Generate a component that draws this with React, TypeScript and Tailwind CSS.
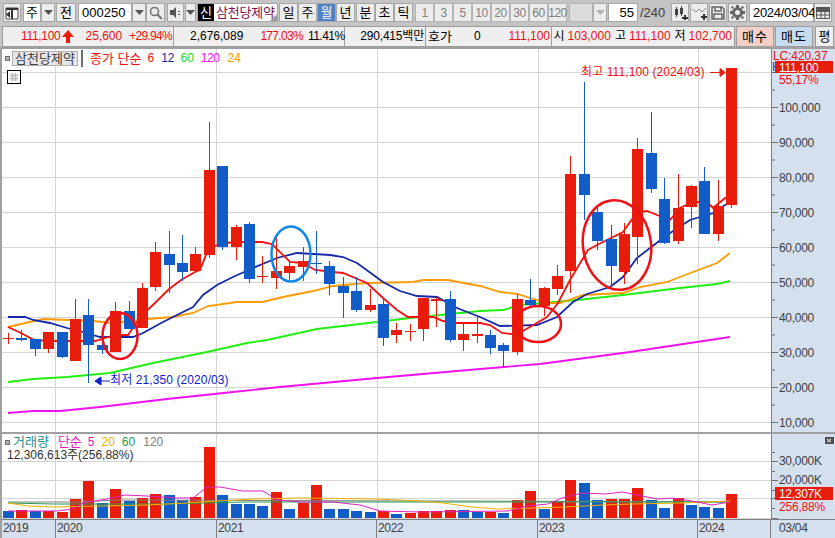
import * as React from 'react';

const RED = '#e81c0a';
const BLUE = '#125cc8';

type Candle = [number, number, number, number, 'r' | 'b'];

// body top, body bottom, wick top, wick bottom
const candles: Candle[] = [
	[338, 338, 333, 344, 'r'], [338, 340, 330, 341, 'b'], [339, 349, 339, 356, 'b'], [332, 349, 332, 353, 'r'],
	[332, 357, 332, 358, 'b'], [319, 361, 299, 361, 'r'], [315, 345, 299, 383, 'b'], [345, 350, 340, 354, 'b'],
	[311, 352, 302, 352, 'r'], [311, 329, 301, 329, 'b'], [288, 328, 283, 328, 'r'], [252, 287, 242, 291, 'r'],
	[254, 265, 231, 293, 'b'], [263, 272, 235, 281, 'b'], [254, 271, 247, 271, 'r'], [170, 255, 122, 258, 'r'],
	[166, 247, 166, 250, 'b'], [227, 247, 225, 260, 'r'], [224, 279, 222, 283, 'b'], [276, 276, 256, 283, 'r'],
	[271, 278, 235, 289, 'r'], [266, 273, 260, 280, 'r'], [261, 267, 247, 281, 'r'], [263, 263, 231, 274, 'b'],
	[266, 284, 261, 295, 'b'], [286, 293, 277, 318, 'b'], [291, 310, 277, 312, 'b'], [305, 310, 289, 312, 'r'],
	[304, 338, 299, 346, 'b'], [330, 335, 323, 343, 'r'], [331, 331, 324, 341, 'r'], [298, 329, 298, 341, 'r'],
	[299, 301, 297, 327, 'r'], [299, 340, 291, 342, 'b'], [334, 340, 322, 351, 'r'], [334, 336, 317, 343, 'r'],
	[335, 348, 330, 354, 'b'], [345, 351, 343, 367, 'b'], [299, 352, 294, 355, 'r'], [300, 305, 279, 308, 'b'],
	[288, 306, 287, 316, 'r'], [276, 289, 265, 295, 'r'], [174, 271, 156, 293, 'r'], [174, 195, 82, 220, 'b'],
	[212, 241, 206, 250, 'b'], [239, 266, 225, 287, 'b'], [234, 272, 223, 284, 'r'], [149, 237, 138, 264, 'r'],
	[153, 189, 112, 193, 'b'], [199, 243, 178, 244, 'b'], [208, 241, 174, 244, 'r'], [186, 207, 185, 228, 'r'],
	[181, 234, 167, 234, 'b'], [206, 234, 180, 241, 'r'], [68, 205, 68, 208, 'r'],
];

const volumes: [number, 'r' | 'b'][] = [
	[511, 'b'], [510, 'r'], [511, 'b'], [511, 'r'], [512, 'r'], [499, 'r'], [481, 'r'], [503, 'b'], [489, 'r'],
	[501, 'b'], [498, 'r'], [494, 'r'], [495, 'b'], [500, 'b'], [497, 'r'], [447, 'r'], [495, 'b'], [504, 'b'],
	[504, 'b'], [506, 'b'], [492, 'r'], [509, 'b'], [503, 'r'], [485, 'r'], [509, 'b'], [509, 'b'], [511, 'b'],
	[512, 'b'], [511, 'r'], [514, 'b'], [513, 'r'], [511, 'r'], [511, 'r'], [510, 'r'], [510, 'b'], [512, 'b'],
	[512, 'r'], [513, 'b'], [500, 'r'], [491, 'r'], [509, 'b'], [501, 'r'], [480, 'r'], [483, 'b'], [500, 'b'],
	[499, 'r'], [499, 'r'], [488, 'r'], [500, 'b'], [508, 'b'], [498, 'r'], [505, 'b'], [507, 'b'], [508, 'b'],
	[494, 'r'],
];

const ma6 = '8,327 21,333 34,340 48,341 95,341 115,335 128,335 141,316 155,303 168,290 181,280 195,272 200,270 208,250 217,245 233,242 262,242 272,244 290,262 303,263 315,270 333,272 343,273 367,283 383,298 397,310 408,317 433,317 443,321 457,323 480,323 490,325 502,333 512,334 523,331 547,317 558,303 570,280 588,250 597,245 623,232 637,212 647,211 657,215 670,220 680,208 693,202 707,202 713,208 725,198 731,195';
const ma12 = '8,317 25,317 33,320 50,323 67,328 83,332 100,337 133,337 143,333 163,322 193,307 203,295 217,285 233,277 253,268 277,258 297,253 330,255 343,257 357,263 383,282 400,291 417,296 437,297 457,308 480,317 500,326 537,325 557,317 573,302 587,294 610,287 623,277 637,258 667,235 690,220 713,213 725,205 731,203';
const ma24 = '8,327 43,319 93,321 113,323 147,319 173,317 193,313 208,306 237,302 262,302 283,297 313,291 333,286 367,283 413,282 423,280 448,280 480,286 500,292 517,294 547,303 560,303 583,295 623,293 640,287 667,282 693,272 717,263 730,253';
const ma60 = '8,382 33,379 67,377 110,373 153,363 207,352 247,343 267,340 317,329 377,322 410,318 480,311 503,310 520,305 577,300 623,295 680,288 717,284 730,281';
const ma120 = '8,413 33,411 60,411 100,407 167,399 233,392 280,387 377,378 480,369 540,364 630,352 730,337';

const volMa5 = '8,511 57,511 73,509 83,503 107,499 125,495 147,496 177,498 193,498 207,487 220,487 243,491 263,491 277,500 300,502 333,502 360,505 380,511 420,512 508,511 528,506 548,504 562,498 582,493 605,494 622,492 642,496 658,499 672,498 692,501 712,505 730,502';
const volMa20 = '8,503 28,506 55,507 100,506 147,505 187,503 200,502 253,499 300,498 377,499 420,501 443,503 472,507 498,509 565,507 602,505 632,504 682,503 730,501';
const volMa120 = '8,502 80,502 115,500 420,501 470,501 730,502';
const volMa60 = '8,503 53,504 167,504 243,502 420,502 730,502';

const gridX = [55.5, 216.5, 377.5, 538.5, 698.5];
const priceY = [72, 107, 142, 177, 212, 247, 282, 317, 352, 387, 422];
const priceLabels: [number, string][] = [
	[107, '100,000'], [142, '90,000'], [177, '80,000'], [212, '70,000'], [247, '60,000'],
	[282, '50,000'], [317, '40,000'], [352, '30,000'], [387, '20,000'], [422, '10,000'],
];

const cx = (i: number) => Math.round(8 + 13.39 * i);

const Btn: React.FC<{ w: string; children?: React.ReactNode; active?: boolean }> = ({ w, children, active }) => (
	<div
		className={`flex h-[19px] shrink-0 items-center justify-center border border-[#a6a6a6] text-[13px] ${w} ${
			active ? 'bg-[#4f81c4] text-white' : 'bg-[#ececec] text-black'
		}`}
	>
		{children}
	</div>
);

const Arrow: React.FC<{ w: string; muted?: boolean }> = ({ w, muted }) => (
	<Btn w={w}>
		<svg width="9" height="5" viewBox="0 0 9 5">
			<path d="M0 0h9L4.5 5z" fill={muted ? '#b0b0b0' : '#555'} />
		</svg>
	</Btn>
);

const Num: React.FC<{ children: React.ReactNode }> = ({ children }) => (
	<div className="flex h-[19px] w-[19px] shrink-0 items-center justify-center border border-[#b4b4b4] bg-[#ececec] text-[12px] tracking-[-0.5px] text-[#808080]">
		{children}
	</div>
);

const Toolbar = () => (
	<div className="flex h-[26px] items-start pt-[3px] pl-[3px]">
		<Btn w="w-[18px]">
			<svg width="14" height="14" viewBox="0 0 14 14">
				<path d="M1 2h12v11H1z" fill="#fff" stroke="#444" />
				<path d="M1 2h12v2H1zM6 4h2v9H6z" fill="#333" />
				<path d="M5 5v7L1 8.500z" fill="#333" />
			</svg>
		</Btn>
		<div className="ml-[2px] flex h-[19px] w-[18px] shrink-0 items-center justify-center border border-[#a6a6a6] bg-white text-[13px]">주</div>
		<Arrow w="w-[14px]" />
		<div className="ml-[1px]"><Btn w="w-[20px]">전</Btn></div>
		<div className="ml-[2px] flex h-[19px] w-[54px] shrink-0 items-center border border-[#a6a6a6] bg-white pl-[3px] text-[13px]">000250</div>
		<Arrow w="w-[14px]" />
		<Btn w="w-[19px]">
			<svg width="14" height="14" viewBox="0 0 14 14" fill="none" stroke="#777" strokeWidth="1.600">
				<circle cx="5.500" cy="5.500" r="4" />
				<path d="M8.500 8.500L13 13" strokeWidth="2.200" />
			</svg>
		</Btn>
		<div className="ml-[2px]">
			<Btn w="w-[17px]">
				<svg width="13" height="13" viewBox="0 0 13 13">
					<path d="M1 4h3l3-3v11L4 9H1z" fill="#555" />
					<path d="M9 5h2v1H9zM9 8h2v1H9z" fill="#555" />
				</svg>
			</Btn>
		</div>
		<div className="ml-[1px]"><Arrow w="w-[11px]" /></div>
		<div className="relative ml-[1px] flex h-[19px] w-[81px] shrink-0 items-center border border-[#a6a6a6] bg-white text-[13px] tracking-[-0.2px] text-[#7a1050]">
			<span className="flex h-[17px] w-[16px] shrink-0 items-center justify-center bg-black text-white">신</span>
			<span className="ml-[2px]">삼천당제약</span>
			<span className="absolute right-0 bottom-0 h-0 w-0 border-b-[7px] border-l-[7px] border-b-[#a0a0a0] border-l-transparent" />
		</div>
		<div className="ml-[1px] flex">
			<Btn w="w-[19px]">일</Btn>
			<Btn w="w-[19px]">주</Btn>
			<Btn w="w-[19px]" active>월</Btn>
			<Btn w="w-[19px]">년</Btn>
		</div>
		<div className="ml-[1px] flex">
			<Btn w="w-[19px]">분</Btn>
			<Btn w="w-[19px]">초</Btn>
			<Btn w="w-[19px]">틱</Btn>
		</div>
		<div className="ml-[2px] flex">
			{['1', '3', '5', '10', '20', '30', '60', '120'].map(n => (
				<Num key={n}>{n}</Num>
			))}
		</div>
		<div className="ml-[2px] h-[19px] w-[24px] shrink-0 border border-[#b4b4b4] bg-[#dcdcdc]" />
		<Arrow w="w-[14px]" muted />
		<div className="ml-[1px] flex h-[19px] w-[30px] shrink-0 items-center justify-end border border-[#a6a6a6] bg-white pr-[3px] text-[13px]">55</div>
		<span className="ml-[2px] w-[31px] shrink-0 pt-[1px] text-[13px] leading-[17px] text-[#404040]">/240</span>
		<div className="flex gap-px">
			<Btn w="w-[18px]">
				<svg width="15" height="14" viewBox="0 0 15 14">
					<path d="M2 3h3v6H2zM7 2h3v6H7zM3 1h1v10H3zM8 0h1v10H8z" fill="#444" />
					<path d="M11 9h2v2h2v2h-2v1h-2v-1H9v-2h2z" fill="#333" />
				</svg>
			</Btn>
			<Btn w="w-[18px]">
				<svg width="15" height="14" viewBox="0 0 15 14" fill="none">
					<path d="M0 3l4 3 3-3 3 3 4-4" stroke="#888" />
					<path d="M11 8h2v2h2v2h-2v2h-2v-2H9v-2h2z" fill="#333" />
				</svg>
			</Btn>
			<Btn w="w-[18px]">
				<svg width="14" height="14" viewBox="0 0 14 14" fill="none" stroke="#666" strokeWidth="1.500">
					<path d="M1 1h10l2 2v10H1z" />
					<path d="M4 1v4h6V1M3 13V8h8v5" />
				</svg>
			</Btn>
			<Btn w="w-[19px]">
				<svg width="15" height="15" viewBox="0 0 15 15">
					<circle cx="7.500" cy="7.500" r="4" fill="none" stroke="#666" strokeWidth="3" />
					<path d="M6 0h3v3H6zM6 12h3v3H6zM0 6h3v3H0zM12 6h3v3h-3zM2 1l2 1-2 2-1-2zM13 1l1 2-2 1-1-2zM2 14l-1-2 2-1 1 2zM13 14l-2-1 1-2 2 1z" fill="#666" />
				</svg>
			</Btn>
		</div>
		<div className="ml-[2px] flex h-[19px] w-[65px] shrink-0 items-center border border-[#a6a6a6] bg-white pl-[3px] text-[13px] tracking-[-0.3px]">2024/03/04</div>
		<Btn w="w-[18px]">
			<svg width="14" height="13" viewBox="0 0 14 13" fill="none" stroke="#555">
				<path d="M.5 1.500h13v11H.5zM.5 5.500h13M.5 9h13M5 5.500v7M9 5.500v7" />
				<path d="M.5 1.500h13v3H.5z" fill="#555" />
			</svg>
		</Btn>
	</div>
);

const InfoRow = () => (
	<div className="flex h-[21px] items-stretch pl-[2px] text-[12px] leading-[19px]">
		<div className="flex w-[172px] items-center justify-end border border-[#9c9c9c] bg-[#efefef] pr-[1px] text-[#f01010]">
			<span className="tracking-[-0.3px]">111,100</span>
			<svg className="ml-[2px]" width="12" height="13" viewBox="0 0 12 13">
				<path d="M6 0l6 7H8v6H4V7H0z" fill={RED} />
			</svg>
			<span className="ml-[11px]">25,600</span>
			<span className="ml-[7px] tracking-[-0.7px]">+29.94%</span>
		</div>
		<div className="flex w-[171px] items-center border-y border-r border-[#9c9c9c] bg-[#efefef]">
			<span className="ml-[16px]">2,676,089</span>
			<span className="ml-[17px] tracking-[-0.7px] text-[#f01010]">177.03%</span>
			<span className="ml-[5px] tracking-[-0.5px]">11.41%</span>
		</div>
		<div className="flex w-[81px] items-center justify-end border-y border-r border-[#9c9c9c] bg-[#efefef] pr-px tracking-[-0.2px]">
			290,415백만
		</div>
		<div className="flex w-[126px] items-center border-y border-r border-[#9c9c9c] bg-[#efefef] pr-[1px]">
			<span className="ml-[2px] text-[13px]">호가</span>
			<span className="ml-[22px]">0</span>
			<span className="ml-auto text-[#f01010]">111,100</span>
		</div>
		<div className="flex w-[183px] items-center justify-end gap-[3px] border-y border-r border-[#9c9c9c] bg-[#efefef] pr-[2px] whitespace-nowrap">
			<span>시</span><span className="text-[#f01010]">103,000</span>
			<span className="ml-[1px]">고</span><span className="text-[#f01010]">111,100</span>
			<span className="ml-[1px]">저</span><span className="text-[#f01010]">102,700</span>
		</div>
		<div className="ml-[1px] flex w-[38px] items-center justify-center border border-[#9c9c9c] bg-[#f4cfc8] text-[13px] tracking-[1px]">매수</div>
		<div className="ml-[1px] flex w-[38px] items-center justify-center border border-[#9c9c9c] bg-[#c5dcf0] text-[13px] tracking-[1px]">매도</div>
		<div className="ml-[2px] flex w-[19px] items-center justify-center border border-[#9c9c9c] bg-[#efefef] text-[13px]">평</div>
	</div>
);

const Square = () => <span className="h-[5px] w-[5px] shrink-0 border border-[#707070] bg-[#b0b0b0]" />;

const PriceChart = () => (
	<svg className="block" width="769" height="383" viewBox="2 49 769 383">
		{priceY.map(y => (
			<line key={y} x1="2" x2="771" y1={y + 0.5} y2={y + 0.5} stroke="#d4d4d4" />
		))}
		{gridX.map(x => (
			<line key={x} x1={x} x2={x} y1="49" y2="432" stroke="#d4d4d4" />
		))}
		<polyline points={ma120} fill="none" stroke="#f010f0" strokeWidth="1.800" />
		<polyline points={ma60} fill="none" stroke="#20f010" strokeWidth="1.800" />
		<polyline points={ma24} fill="none" stroke="#ff9a00" strokeWidth="1.800" />
		<polyline points={ma12} fill="none" stroke="#1428a8" strokeWidth="1.800" />
		<polyline points={ma6} fill="none" stroke="#f51010" strokeWidth="1.800" />
		<g shapeRendering="crispEdges">
			{candles.map(([top, bot, wt, wb, c], i) => (
				<g key={i} fill={c === 'r' ? RED : BLUE}>
					<rect x={cx(i)} y={wt} width="1" height={wb - wt} />
					<rect x={cx(i) - 5} y={top} width="11" height={Math.max(bot - top, 1)} />
				</g>
			))}
		</g>
		<g fill="none">
			<ellipse cx="120" cy="336" rx="17.500" ry="23" stroke="#f01018" strokeWidth="2.500" />
			<ellipse cx="538" cy="324" rx="23" ry="18" stroke="#f01018" strokeWidth="2.500" />
			<ellipse cx="617" cy="245" rx="34" ry="45" stroke="#f01018" strokeWidth="2.500" transform="rotate(-8 617 245)" />
			<ellipse cx="291" cy="254" rx="19.500" ry="27.500" stroke="#1088e8" strokeWidth="2.500" />
		</g>
		<text x="581" y="76" fontSize="12" fill="#f01010" letterSpacing="0.100">최고 111,100 (2024/03)</text>
		<path d="M710 72.500h10M720 68.500l5 4-5 4z" stroke={RED} fill={RED} />
		<path d="M95 381l6-4v8zM100 381h10" stroke="#1020d0" fill="#1020d0" />
		<text x="110" y="384" fontSize="12" fill="#1020d0" letterSpacing="0.100">최저 21,350 (2020/03)</text>
	</svg>
);

const VolumeChart = () => (
	<svg className="block" width="769" height="85" viewBox="2 434 769 85">
		{[461.5, 480.5, 498.5, 518.5].map(y => (
			<line key={y} x1="2" x2="771" y1={y} y2={y} stroke="#d4d4d4" />
		))}
		{gridX.map(x => (
			<line key={x} x1={x} x2={x} y1="434" y2="520" stroke="#d4d4d4" />
		))}
		<g shapeRendering="crispEdges">
			{volumes.map(([top, c], i) => (
				<rect key={i} x={cx(i) - 5} y={top} width="11" height={518 - top} fill={c === 'r' ? RED : BLUE} />
			))}
		</g>
		<polyline points={volMa120} fill="none" stroke="#808080" strokeWidth="1" />
		<polyline points={volMa60} fill="none" stroke="#20a050" strokeWidth="1" />
		<polyline points={volMa20} fill="none" stroke="#f0b000" strokeWidth="1" />
		<polyline points={volMa5} fill="none" stroke="#e020c0" strokeWidth="1" />
	</svg>
);

const PriceAxis = () => (
	<svg className="block" width="64" height="383" viewBox="771 49 64 383">
		{Array.from({ length: 22 }, (_, i) => 72 + i * 17.5).map(y => (
			<line key={y} x1="771" x2={(y - 72) % 35 === 0 ? 777 : 774} y1={y + 0.5} y2={y + 0.5} stroke="#707070" />
		))}
		{priceLabels.map(([y, t]) => (
			<text key={t} x="778" y={y + 5} fontSize="12" fill="#404040" letterSpacing="-0.3">{t}</text>
		))}
		<text x="772" y="60" fontSize="12" fill="#f01010" letterSpacing="-0.1">LC:420,37</text>
		<text x="771" y="71" fontSize="12" fill="#1040d0">H</text>
		<rect x="774" y="61" width="58" height="12" fill={RED} />
		<text x="778" y="72" fontSize="12" fill="#fff" letterSpacing="-0.3">111,100</text>
		<text x="778" y="84" fontSize="12" fill="#f01010" letterSpacing="-0.2">55,17%</text>
	</svg>
);

const VolumeAxis = () => (
	<svg className="block" width="64" height="85" viewBox="771 434 64 85">
		{[452, 461, 471, 480, 490, 498, 508, 518].map(y => (
			<line key={y} x1="771" x2={y === 461 || y === 480 || y === 498 || y === 518 ? 777 : 774} y1={y + 0.5} y2={y + 0.5} stroke="#707070" />
		))}
		<text x="778" y="465" fontSize="12" fill="#404040" letterSpacing="-0.3">30,000K</text>
		<text x="778" y="484" fontSize="12" fill="#404040" letterSpacing="-0.3">20,000K</text>
		<rect x="774" y="487" width="58" height="13" fill={RED} />
		<text x="778" y="498" fontSize="12" fill="#fff" letterSpacing="-0.3">12,307K</text>
		<text x="778" y="511" fontSize="12" fill="#f01010" letterSpacing="-0.2">256,88%</text>
		<rect x="824" y="437" width="9" height="7" fill="#505050" />
		<path d="M826 439l4 3M830 439l-4 3" stroke="#fff" />
	</svg>
);

const YearCell: React.FC<{ w: string; label: string }> = ({ w, label }) => (
	<div className={`h-full shrink-0 border-r border-[#808080] pl-[1px] text-[12px] leading-[17px] tracking-[-0.3px] text-[#404040] ${w}`}>
		{label}
	</div>
);

export default function App() {
	return (
		<div className="flex h-[538px] w-[835px] flex-col overflow-hidden bg-[#c4c4c4] font-['Liberation_Sans','Noto_Sans_CJK_KR',sans-serif] text-black">
			<Toolbar />
			<InfoRow />
			<div className="flex min-h-0 flex-1 flex-col border-t-2 border-l-2 border-[#a0a0a0] bg-white">
				{/* price pane */}
				<div className="flex h-[383px] shrink-0">
					<div className="relative w-[769px] shrink-0">
						<PriceChart />
						<div className="absolute top-[2px] left-[3px] flex items-center text-[13px] leading-[15px]">
							<Square />
							<span className="ml-[2px] flex h-[15px] w-[66px] items-center justify-center border border-[#b0b0b0] bg-[#e6e6e6] text-[#404040]">삼천당제약</span>
							<span className="ml-[3px]"><Square /></span>
							<span className="ml-[7px] text-[#f01010]">종가 단순</span>
							<span className="ml-[6px] text-[12px] text-[#f01010]">6</span>
							<span className="ml-[7px] text-[12px] text-[#1428a8]">12</span>
							<span className="ml-[6px] text-[12px] text-[#20e010]">60</span>
							<span className="ml-[7px] text-[12px] tracking-[-0.5px] text-[#f010f0]">120</span>
							<span className="ml-[8px] text-[12px] text-[#ff9a00]">24</span>
						</div>
						<div className="absolute top-[21px] left-[5px] h-[14px] w-[14px] border border-black bg-white p-[2px]">
							<div className="grid h-full w-full grid-cols-3 gap-px bg-[#b8b8b8]">
								{Array.from({ length: 9 }, (_, i) => (
									<span key={i} className="bg-[#e8e8e8]" />
								))}
							</div>
						</div>
					</div>
					<div className="w-[64px] shrink-0 border-l border-[#808080] bg-[#d5e0ef]">
						<PriceAxis />
					</div>
				</div>
				<div className="h-[2px] shrink-0 bg-[#a0a0a0]" />
				{/* volume pane */}
				<div className="flex h-[85px] shrink-0">
					<div className="relative w-[769px] shrink-0">
						<VolumeChart />
						<div className="absolute top-[1px] left-[3px] flex items-center text-[13px] leading-[14px]">
							<Square />
							<span className="ml-[3px] text-[#209090]">거래량</span>
							<span className="ml-[9px] text-[#e020c0]">단순</span>
							<span className="ml-[6px] text-[12px] text-[#e020c0]">5</span>
							<span className="ml-[7px] text-[12px] text-[#f0b000]">20</span>
							<span className="ml-[7px] text-[12px] text-[#20a050]">60</span>
							<span className="ml-[8px] text-[12px] text-[#808080]">120</span>
						</div>
						<div className="absolute top-[14px] left-[5px] text-[12px] leading-[14px] text-[#303030]">12,306,613주(256,88%)</div>
					</div>
					<div className="w-[64px] shrink-0 border-l border-[#808080] bg-[#d5e0ef]">
						<VolumeAxis />
					</div>
				</div>
				{/* time axis */}
				<div className="flex min-h-0 flex-1 border-t border-[#808080] bg-[#d5e0ef]">
					<YearCell w="w-[54px]" label="2019" />
					<YearCell w="w-[161px]" label="2020" />
					<YearCell w="w-[160px]" label="2021" />
					<YearCell w="w-[161px]" label="2022" />
					<YearCell w="w-[160px]" label="2023" />
					<YearCell w="w-[73px]" label="2024" />
					<div className="pl-[8px] text-[12px] leading-[17px] tracking-[-0.3px] text-[#404040]">03/04</div>
				</div>
			</div>
		</div>
	);
}
